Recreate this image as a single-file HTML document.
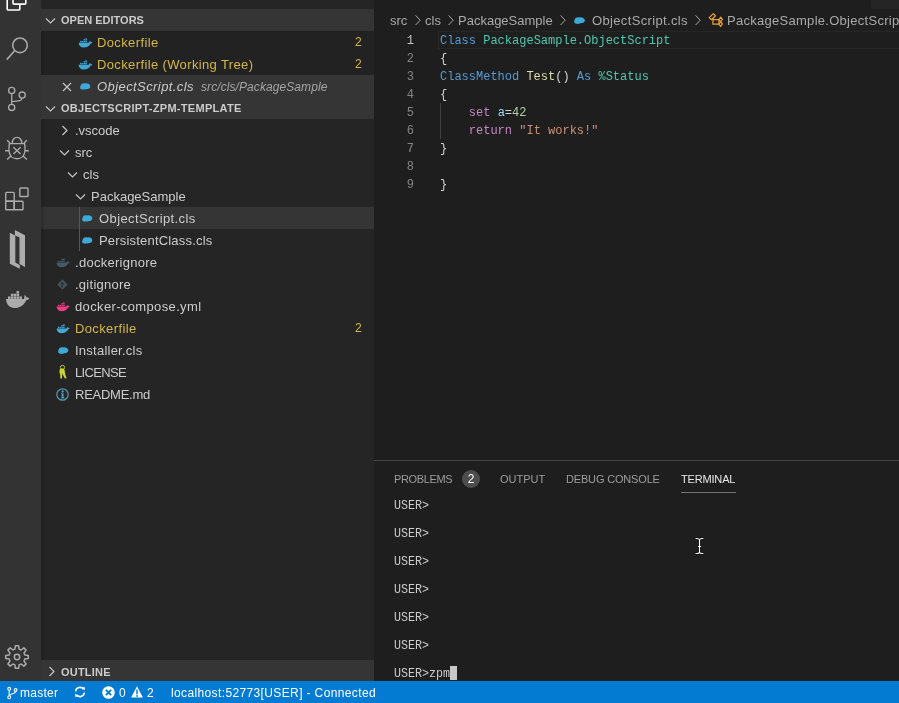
<!DOCTYPE html>
<html><head><meta charset="utf-8">
<style>
*{box-sizing:border-box;margin:0;padding:0}
html,body{width:899px;height:703px;overflow:hidden;background:#1e1e1e;font-family:"Liberation Sans",sans-serif;color:#ccc}
.a{position:absolute}
#act,#side,#ed,#status{will-change:transform}
svg{position:absolute;overflow:visible}
#act{left:0;top:0;width:41px;height:681px;background:#333}
#side{left:41px;top:0;width:333px;height:681px;background:#252526;overflow:hidden}
.hdr{position:absolute;left:0;width:333px;height:22px;background:#353535;font-weight:bold;font-size:11px;color:#ccc;line-height:22px;white-space:nowrap}
.hdr span{position:absolute;left:20px;top:0}
.row{position:absolute;left:0;width:333px;height:22px;font-size:13px;line-height:22px;white-space:nowrap}
.row .t{position:absolute;top:1px}
.yel{color:#d5b747}
.badge{position:absolute;left:314px;top:0;font-size:12px;color:#d5b747}
#ed{left:374px;top:0;width:525px;height:681px;background:#1e1e1e;overflow:hidden}
.mono{font-family:"Liberation Mono",monospace;font-size:12px}
.ln{position:absolute;width:40px;text-align:right;left:0;margin-top:1px;color:#858585;font-family:"Liberation Mono",monospace;font-size:12px;line-height:18px}
.code{position:absolute;left:66px;margin-top:1px;white-space:pre;color:#d4d4d4;font-family:"Liberation Mono",monospace;font-size:12px;line-height:18px}
.kw{color:#569cd6}.ty{color:#4ec9b0}.fn{color:#dcdcaa}.ct{color:#c586c0}.vr{color:#9cdcfe}.nm{color:#b5cea8}.st{color:#ce9178}
.bc{position:absolute;top:10px;height:22px;line-height:22px;font-size:13px;color:#a9a9a9;white-space:nowrap}
.ptab{position:absolute;top:468px;height:22px;line-height:22px;font-size:11px;color:#9d9d9d;white-space:nowrap}
.term{position:absolute;left:20px;font-family:"Liberation Mono",monospace;font-size:13px;transform:scaleX(0.8975);transform-origin:0 0;line-height:14px;color:#ccc;white-space:pre}
#status{left:0;top:681px;width:899px;height:22px;background:#047bd3;color:#fff;font-size:12px;line-height:22px;white-space:nowrap}
#status span{position:absolute;top:1px}
</style></head><body>
<svg width="0" height="0" style="position:absolute">
<defs>
<symbol id="whale" viewBox="0 0 16 11">
<path d="M0.6 5.2H11.9C12.2 4.3 12.6 3.6 13.2 3.3C13.8 3.5 14.2 4 14.3 4.5C14.9 4.4 15.5 4.6 15.9 5C15.5 5.8 14.8 6.1 14 6.1C12.6 9.2 9.8 10.6 6.5 10.6C3 10.6 0.9 8.6 0.6 5.2Z"/>
<rect x="2.2" y="3.2" width="1.6" height="1.6"/><rect x="4.2" y="3.2" width="1.6" height="1.6"/><rect x="6.2" y="3.2" width="1.6" height="1.6"/><rect x="8.2" y="3.2" width="1.6" height="1.6"/>
<rect x="6.2" y="1.2" width="1.6" height="1.6"/><rect x="8.2" y="1.2" width="1.6" height="1.6"/><rect x="8.2" y="-0.8" width="1.6" height="1.6"/>
</symbol>
<symbol id="dock" viewBox="0 0 23.3 17">
<path d="M0 8.1H18.1C18.2 6.5 18.4 5 18.8 3.7C19.6 4.3 20.1 5.2 20.2 6.2C21.3 6.1 22.4 6.5 23.3 7.4C22.5 8.4 21.5 8.9 20.3 8.9C18.3 13.8 14 17 8.5 17C3.5 17 0.3 13.5 0 8.1Z"/>
<rect x="2" y="5.4" width="2.55" height="2.5"/><rect x="4.85" y="5.4" width="2.55" height="2.5"/><rect x="7.7" y="5.4" width="2.55" height="2.5"/><rect x="10.55" y="5.4" width="2.55" height="2.5"/><rect x="13.4" y="5.4" width="2.55" height="2.5"/>
<rect x="4.85" y="2.7" width="2.55" height="2.5"/><rect x="7.7" y="2.7" width="2.55" height="2.5"/><rect x="10.55" y="2.7" width="2.55" height="2.5"/>
<rect x="10.55" y="0" width="2.55" height="2.5"/>
</symbol>
<symbol id="blob" viewBox="0 0 10 7"><path d="M1.6 0.7C2.6 0.1 4.3 0 5.3 0.4C6 0.1 7.4 0.3 8.2 0.9C9.4 1.5 10 2.5 9.9 3.6C9.8 5 8.7 5.9 7.3 6.1C6 6.3 4.6 6.9 3.3 6.9C2 6.9 0.7 6.5 0.2 5.6C0 4.4 0.3 3.1 0.8 2.2C1 1.6 1.2 1.1 1.6 0.7Z"/></symbol>
</defs>
</svg>

<div id="act" class="a">
  <!-- explorer (cut off) -->
  <svg style="left:0;top:0" width="41" height="12"><g fill="none" stroke="#fff" stroke-width="1.6" stroke-linejoin="round"><path d="M13 -3V3Q13 4.1 14.1 4.1H24.7Q25.8 4.1 25.8 3V-3"/><path d="M7.2 -3V8.9Q7.2 10 8.3 10H18.7Q19.8 10 19.8 8.9V4.9"/></g></svg>
  <!-- search -->
  <svg style="left:0;top:30px" width="41" height="40"><g fill="none" stroke="#a8a8a8" stroke-width="1.6"><circle cx="20" cy="15.3" r="7.3"/><path d="M14.8 20.5L6.8 29.6"/></g></svg>
  <!-- scm -->
  <svg style="left:0;top:80px" width="41" height="40"><g fill="none" stroke="#ababab" stroke-width="1.3"><circle cx="11.7" cy="10.5" r="3.1"/><circle cx="22.2" cy="15.1" r="3.1"/><circle cx="11.7" cy="27.4" r="3.1"/><path d="M11.7 13.6V24.3"/><path d="M22.2 18.2C21.8 20.6 19.5 21 11.7 21.6"/></g></svg>
  <!-- debug -->
  <svg style="left:0;top:128px" width="41" height="40"><g fill="none" stroke="#ababab" stroke-width="1.4"><path d="M12.3 15.3C12.1 11.8 14.2 9.4 17 9.4C19.8 9.4 21.9 11.8 21.7 15.3"/><path d="M9.4 15.6H24.6C25.1 18 25.2 21 24.9 23.5C24.3 28 21 30.8 17 30.8C13 30.8 9.7 28 9.1 23.5C8.8 21 8.9 18 9.4 15.6Z"/><path d="M13.4 19.3L20.6 26M20.6 19.3L13.4 26"/><path d="M7.1 12.2L10 15.1M26.9 12.2L24 15.1M5.1 22.75H9M25 22.75H28.9M7.1 31.6L11 27.9M26.9 31.6L23 27.9"/></g></svg>
  <!-- extensions -->
  <svg style="left:0;top:180px" width="41" height="40"><g fill="none" stroke="#ababab" stroke-width="1.4"><rect x="5.7" y="12.4" width="8.5" height="8.9" rx="0.8"/><rect x="5.7" y="21.3" width="8.5" height="8.5" rx="0.8"/><rect x="14.2" y="21.3" width="8.8" height="8.5" rx="0.8"/><rect x="19.8" y="8" width="8.2" height="8.5" rx="0.8"/></g></svg>
  <!-- intersystems -->
  <svg style="left:0;top:225px" width="41" height="50"><g fill="#adadad"><path d="M9.8 7.8L15.3 10.6V37.6L19.8 39.9V43.8L9.8 38.7Z"/><path d="M14.9 5.1L25 10.2V41.9L19.5 39.1V12.5L14.9 10.2Z"/></g></svg>
  <!-- docker -->
  <svg style="left:5.7px;top:290.8px" width="23.3" height="17" viewBox="0 0 23.3 17" fill="#ababab"><use href="#dock"/></svg>
  <!-- gear -->
  <svg style="left:0;top:637px" width="41" height="40"><g fill="none" stroke="#ababab" stroke-width="1.5" stroke-linejoin="round"><path d="M14.90 12.18 L15.41 8.71 L18.59 8.71 L19.10 12.18 L21.05 12.99 L23.86 10.90 L26.10 13.14 L24.01 15.95 L24.82 17.90 L28.29 18.41 L28.29 21.59 L24.82 22.10 L24.01 24.05 L26.10 26.86 L23.86 29.10 L21.05 27.01 L19.10 27.82 L18.59 31.29 L15.41 31.29 L14.90 27.82 L12.95 27.01 L10.14 29.10 L7.90 26.86 L9.99 24.05 L9.18 22.10 L5.71 21.59 L5.71 18.41 L9.18 17.90 L9.99 15.95 L7.90 13.14 L10.14 10.90 L12.95 12.99Z"/><circle cx="17" cy="20" r="2.7"/></g></svg>
</div>

<div id="side" class="a">
  <div class="hdr" style="top:9px"><svg style="left:4px;top:8px" width="12" height="8"><path d="M1 1.5L5.5 6L10 1.5" fill="none" stroke="#c5c5c5" stroke-width="1.2"/></svg><span>OPEN EDITORS</span></div>
  <div class="row" style="top:31px;background:#222"><svg style="left:36.5px;top:6.5px" width="14.5" height="10" viewBox="0 0 16 11" fill="#40a6d4"><use href="#whale"/></svg><span class="t yel" style="left:56px;letter-spacing:0.37px">Dockerfile</span><span class="badge">2</span></div>
  <div class="row" style="top:53px;background:#222"><svg style="left:36.5px;top:6.5px" width="14.5" height="10" viewBox="0 0 16 11" fill="#40a6d4"><use href="#whale"/></svg><span class="t yel" style="left:56px;letter-spacing:0.37px">Dockerfile (Working Tree)</span><span class="badge">2</span></div>
  <div class="row" style="top:75px;background:#353535"><svg style="left:21px;top:7px" width="10" height="9"><path d="M1 1L9 9M9 1L1 9" fill="none" stroke="#c5c5c5" stroke-width="1.2"/></svg><svg style="left:38.5px;top:8px" width="10.5" height="6.8" viewBox="0 0 10 7" preserveAspectRatio="none" fill="#3ea8d6"><use href="#blob"/></svg><span class="t" style="left:56px;font-style:italic;letter-spacing:0.42px">ObjectScript.cls</span><span class="t" style="left:160px;font-style:italic;font-size:12px;color:#a5a5a5;letter-spacing:0.08px">src/cls/PackageSample</span></div>
  <div class="hdr" style="top:97px"><svg style="left:4px;top:8px" width="12" height="8"><path d="M1 1.5L5.5 6L10 1.5" fill="none" stroke="#c5c5c5" stroke-width="1.2"/></svg><span style="letter-spacing:0.29px">OBJECTSCRIPT-ZPM-TEMPLATE</span></div>
  <div class="row" style="top:119px"><svg style="left:20px;top:6px" width="8" height="12"><path d="M1.5 1L6 5.5L1.5 10" fill="none" stroke="#c5c5c5" stroke-width="1.2"/></svg><span class="t" style="left:34px">.vscode</span></div>
  <div class="row" style="top:141px"><svg style="left:18px;top:8px" width="12" height="8"><path d="M1 1.5L5.5 6L10 1.5" fill="none" stroke="#c5c5c5" stroke-width="1.2"/></svg><span class="t" style="left:34px">src</span></div>
  <div class="row" style="top:163px"><svg style="left:26px;top:8px" width="12" height="8"><path d="M1 1.5L5.5 6L10 1.5" fill="none" stroke="#c5c5c5" stroke-width="1.2"/></svg><span class="t" style="left:42px">cls</span></div>
  <div class="row" style="top:185px"><svg style="left:34px;top:8px" width="12" height="8"><path d="M1 1.5L5.5 6L10 1.5" fill="none" stroke="#c5c5c5" stroke-width="1.2"/></svg><span class="t" style="left:50px">PackageSample</span></div>
  <div class="row" style="top:207px;background:#353535"><svg style="left:40.5px;top:8px" width="10.5" height="6.8" viewBox="0 0 10 7" preserveAspectRatio="none" fill="#3ea8d6"><use href="#blob"/></svg><span class="t" style="left:58px;letter-spacing:0.4px">ObjectScript.cls</span></div>
  <div class="row" style="top:229px"><svg style="left:40.5px;top:8px" width="10.5" height="6.8" viewBox="0 0 10 7" preserveAspectRatio="none" fill="#3ea8d6"><use href="#blob"/></svg><span class="t" style="left:58px;letter-spacing:0.19px">PersistentClass.cls</span></div>
  <div class="a" style="left:38px;top:207px;width:1px;height:44px;background:#585858"></div>
  <div class="row" style="top:251px"><svg style="left:15px;top:6.5px" width="14" height="9.6" viewBox="0 0 16 11" fill="#455a64"><use href="#whale"/></svg><span class="t" style="left:34px;letter-spacing:0.27px">.dockerignore</span></div>
  <div class="row" style="top:273px"><svg style="left:16px;top:6px" width="11" height="11" viewBox="0 0 11 11"><path d="M5.5 0.3L10.7 5.5L5.5 10.7L0.3 5.5Z" fill="#41535b"/><path d="M5 3V8.5" stroke="#252526" stroke-width="1.2"/><path d="M5 3.5L7 5.5" stroke="#252526" stroke-width="1"/></svg><span class="t" style="left:34px;letter-spacing:0.26px">.gitignore</span></div>
  <div class="row" style="top:295px"><svg style="left:15px;top:6.5px" width="14" height="9.6" viewBox="0 0 16 11" fill="#ee3d82"><use href="#whale"/></svg><span class="t" style="left:34px;letter-spacing:0.36px">docker-compose.yml</span></div>
  <div class="row" style="top:317px"><svg style="left:15px;top:6.5px" width="14" height="9.6" viewBox="0 0 16 11" fill="#40a6d4"><use href="#whale"/></svg><span class="t yel" style="left:34px;letter-spacing:0.37px">Dockerfile</span><span class="badge">2</span></div>
  <div class="row" style="top:339px"><svg style="left:16.5px;top:7.5px" width="10.5" height="7" viewBox="0 0 10 7" preserveAspectRatio="none" fill="#3ea8d6"><use href="#blob"/></svg><span class="t" style="left:34px;letter-spacing:0.24px">Installer.cls</span></div>
  <div class="row" style="top:361px"><svg style="left:17px;top:4px" width="10" height="15" viewBox="0 0 10 15"><circle cx="4.5" cy="2.4" r="2.1" fill="none" stroke="#b9bf5a" stroke-width="1"/><path fill="#cdd32f" d="M1.8 4.5C1.2 6 1.5 8 2.2 9.5L2.3 13.3C2.8 13.9 3.6 13.9 4 13.3L4.2 8.2C4.8 9.7 5.8 11.6 6.8 13.3C7.5 13.9 8.4 13.5 8.5 12.8C7.8 11 6.9 8.5 6.8 6.5C6.9 5.5 6.5 4.3 5.5 3.8C4.3 3.3 2.5 3.5 1.8 4.5Z"/></svg><span class="t" style="left:34px;letter-spacing:-0.68px">LICENSE</span></div>
  <div class="row" style="top:383px"><svg style="left:15px;top:4.5px" width="13" height="13" viewBox="0 0 13 13"><circle cx="6.5" cy="6.5" r="5.7" fill="none" stroke="#519aba" stroke-width="1.2"/><circle cx="6.6" cy="3.5" r="1.15" fill="#519aba"/><path d="M5 5.2H7.6V9.5H8.4V10.5H4.9V9.5H5.7V6.2H5Z" fill="#519aba"/></svg><span class="t" style="left:34px;letter-spacing:-0.25px">README.md</span></div>
  <div class="a" style="left:0;top:31px;width:3px;height:44px;background:rgba(0,0,0,0.1)"></div>
  <div class="a" style="left:0;top:119px;width:3px;height:541px;background:rgba(0,0,0,0.1)"></div>
  <div class="hdr" style="top:660px;height:21px"><svg style="left:7px;top:6px" width="8" height="12"><path d="M1.5 1L6 5.5L1.5 10" fill="none" stroke="#c5c5c5" stroke-width="1.2"/></svg><span style="letter-spacing:0.2px;top:0.5px">OUTLINE</span></div>
</div>

<div id="ed" class="a">
  <div class="a" style="left:0;top:0;width:525px;height:9px;background:#1e1e1e"></div>
  <div class="a" style="left:497px;top:0;width:28px;height:9px;background:#252526"></div>
  <span class="bc" style="left:16px">src</span>
  <svg style="left:41px;top:15px" width="6" height="11"><path d="M0.6 0.4L5.2 5.2L0.6 10" fill="none" stroke="#a9a9a9" stroke-width="1"/></svg>
  <span class="bc" style="left:51px">cls</span>
  <svg style="left:74px;top:15px" width="6" height="11"><path d="M0.6 0.4L5.2 5.2L0.6 10" fill="none" stroke="#a9a9a9" stroke-width="1"/></svg>
  <span class="bc" style="left:84px">PackageSample</span>
  <svg style="left:186px;top:15px" width="6" height="11"><path d="M0.6 0.4L5.2 5.2L0.6 10" fill="none" stroke="#a9a9a9" stroke-width="1"/></svg>
  <svg style="left:200px;top:17px" width="11" height="7" viewBox="0 0 10 7" preserveAspectRatio="none" fill="#3ea8d6"><use href="#blob"/></svg>
  <span class="bc" style="left:218px;letter-spacing:0.35px">ObjectScript.cls</span>
  <svg style="left:321px;top:15px" width="6" height="11"><path d="M0.6 0.4L5.2 5.2L0.6 10" fill="none" stroke="#a9a9a9" stroke-width="1"/></svg>
  <svg style="left:334px;top:13px" width="16" height="15" viewBox="0 0 16 15"><g fill="none" stroke="#e9a23a" stroke-width="1.2" stroke-linejoin="round"><path d="M1.2 4.6L5.3 0.6L7.5 2.7L3.4 6.7Z"/><path d="M4.9 5.6V11.2H10.9V6.7H4.9"/><path d="M10.9 6.7L12.7 4.2L14.4 6.3L12.6 8.8Z"/><path d="M10.9 11.2L12.7 8.8L14.4 10.9L12.6 13.5Z"/></g></svg>
  <span class="bc" style="left:353px;letter-spacing:0.28px">PackageSample.ObjectScript</span>

  <!-- current line -->
  <div class="a" style="left:64px;top:31px;width:461px;height:18px;border:1px solid #262626;border-right:none"></div>
  <div class="ln" style="top:31px;color:#c6c6c6">1</div>
  <div class="ln" style="top:49px">2</div>
  <div class="ln" style="top:67px">3</div>
  <div class="ln" style="top:85px">4</div>
  <div class="ln" style="top:103px">5</div>
  <div class="ln" style="top:121px">6</div>
  <div class="ln" style="top:139px">7</div>
  <div class="ln" style="top:157px">8</div>
  <div class="ln" style="top:175px">9</div>
  <div class="code" style="top:31px"><span class="kw">Class</span> <span class="ty">PackageSample.ObjectScript</span></div>
  <div class="code" style="top:49px">{</div>
  <div class="code" style="top:67px"><span class="kw">ClassMethod</span> <span class="fn">Test</span>() <span class="kw">As</span> <span class="ty">%Status</span></div>
  <div class="code" style="top:85px">{</div>
  <div class="code" style="top:103px">    <span class="ct">set</span> <span class="vr">a</span>=<span class="nm">42</span></div>
  <div class="code" style="top:121px">    <span class="ct">return</span> <span class="st">"It works!"</span></div>
  <div class="code" style="top:139px">}</div>
  <div class="code" style="top:175px">}</div>
  <div class="a" style="left:66px;top:103px;width:1px;height:36px;background:#404040"></div>

  <!-- panel -->
  <div class="a" style="left:0;top:460px;width:525px;height:1px;background:#444"></div>
  <span class="ptab" style="left:20px;letter-spacing:-0.35px">PROBLEMS</span>
  <div class="a" style="left:88px;top:470px;width:18px;height:18px;border-radius:9px;background:#4d4d4d;color:#fff;font-size:12px;line-height:18px;text-align:center">2</div>
  <span class="ptab" style="left:126px">OUTPUT</span>
  <span class="ptab" style="left:192px;letter-spacing:-0.17px">DEBUG CONSOLE</span>
  <span class="ptab" style="left:307px;color:#e7e7e7;letter-spacing:-0.17px">TERMINAL</span>
  <div class="a" style="left:307px;top:492px;width:55px;height:1px;background:#737373"></div>
  <div class="term" style="top:499px">USER&gt;</div>
  <div class="term" style="top:527px">USER&gt;</div>
  <div class="term" style="top:555px">USER&gt;</div>
  <div class="term" style="top:583px">USER&gt;</div>
  <div class="term" style="top:611px">USER&gt;</div>
  <div class="term" style="top:639px">USER&gt;</div>
  <div class="term" style="top:667px">USER&gt;zpm</div>
  <div class="a" style="left:76px;top:666px;width:7px;height:14px;background:#c8c8c8"></div>
  <!-- I-beam cursor -->
  <svg style="left:320px;top:537px" width="11" height="18"><g fill="none" stroke="#0c0c0c" stroke-width="2.4" stroke-linecap="round" opacity="0.6"><path d="M1.9 1.5C3.5 1.3 5 1.6 5.5 2.8C6 1.6 7.5 1.3 9 1.5M5.5 2.8V15.2M1.9 16.5C3.5 16.7 5 16.4 5.5 15.2C6 16.4 7.5 16.7 9 16.5M4.4 9.5H6.6"/></g><g fill="none" stroke="#fff" stroke-width="1.1" stroke-linecap="round"><path d="M1.9 1.5C3.5 1.3 5 1.6 5.5 2.8C6 1.6 7.5 1.3 9 1.5M5.5 2.8V15.2M1.9 16.5C3.5 16.7 5 16.4 5.5 15.2C6 16.4 7.5 16.7 9 16.5M4.4 9.5H6.6"/></g></svg>
</div>

<div id="status" class="a">
  <svg style="left:7px;top:6px" width="11" height="12" viewBox="0 0 11 12"><g fill="none" stroke="#fff" stroke-width="1.1"><circle cx="2.2" cy="1.8" r="1.4"/><circle cx="8.6" cy="3" r="1.4"/><circle cx="2.2" cy="10.2" r="1.4"/><path d="M2.2 3.2V8.8"/><path d="M8.6 4.4C8.6 7 2.6 6.5 2.6 8.8"/></g></svg>
  <span style="left:20px;letter-spacing:0.25px">master</span>
  <svg style="left:74px;top:5px" width="12" height="12" viewBox="0 0 12 12"><g fill="none" stroke="#fff" stroke-width="1.6"><path d="M1.6 5.3A4.4 4.4 0 0 1 9.5 3.2"/><path d="M10.4 6.7A4.4 4.4 0 0 1 2.5 8.8"/></g><path d="M7.4 1.2H10.8V4.6Z" fill="#fff"/><path d="M4.6 10.8H1.2V7.4Z" fill="#fff"/></svg>
  <svg style="left:102px;top:5px" width="13" height="13" viewBox="0 0 13 13"><circle cx="6.5" cy="6.5" r="6.3" fill="#fff"/><path d="M3.9 3.9L9.1 9.1M9.1 3.9L3.9 9.1" stroke="#047bd3" stroke-width="1.9"/></svg>
  <span style="left:119px">0</span>
  <svg style="left:131px;top:5px" width="12" height="12" viewBox="0 0 12 12"><path d="M6 0.3L11.9 11.6H0.1Z" fill="#fff"/><path d="M6 3.6V8.2" stroke="#047bd3" stroke-width="1.5"/><circle cx="6" cy="9.9" r="0.9" fill="#047bd3"/></svg>
  <span style="left:147px">2</span>
  <span style="left:171px;letter-spacing:0.37px">localhost:52773[USER] - Connected</span>
</div>
</body></html>
